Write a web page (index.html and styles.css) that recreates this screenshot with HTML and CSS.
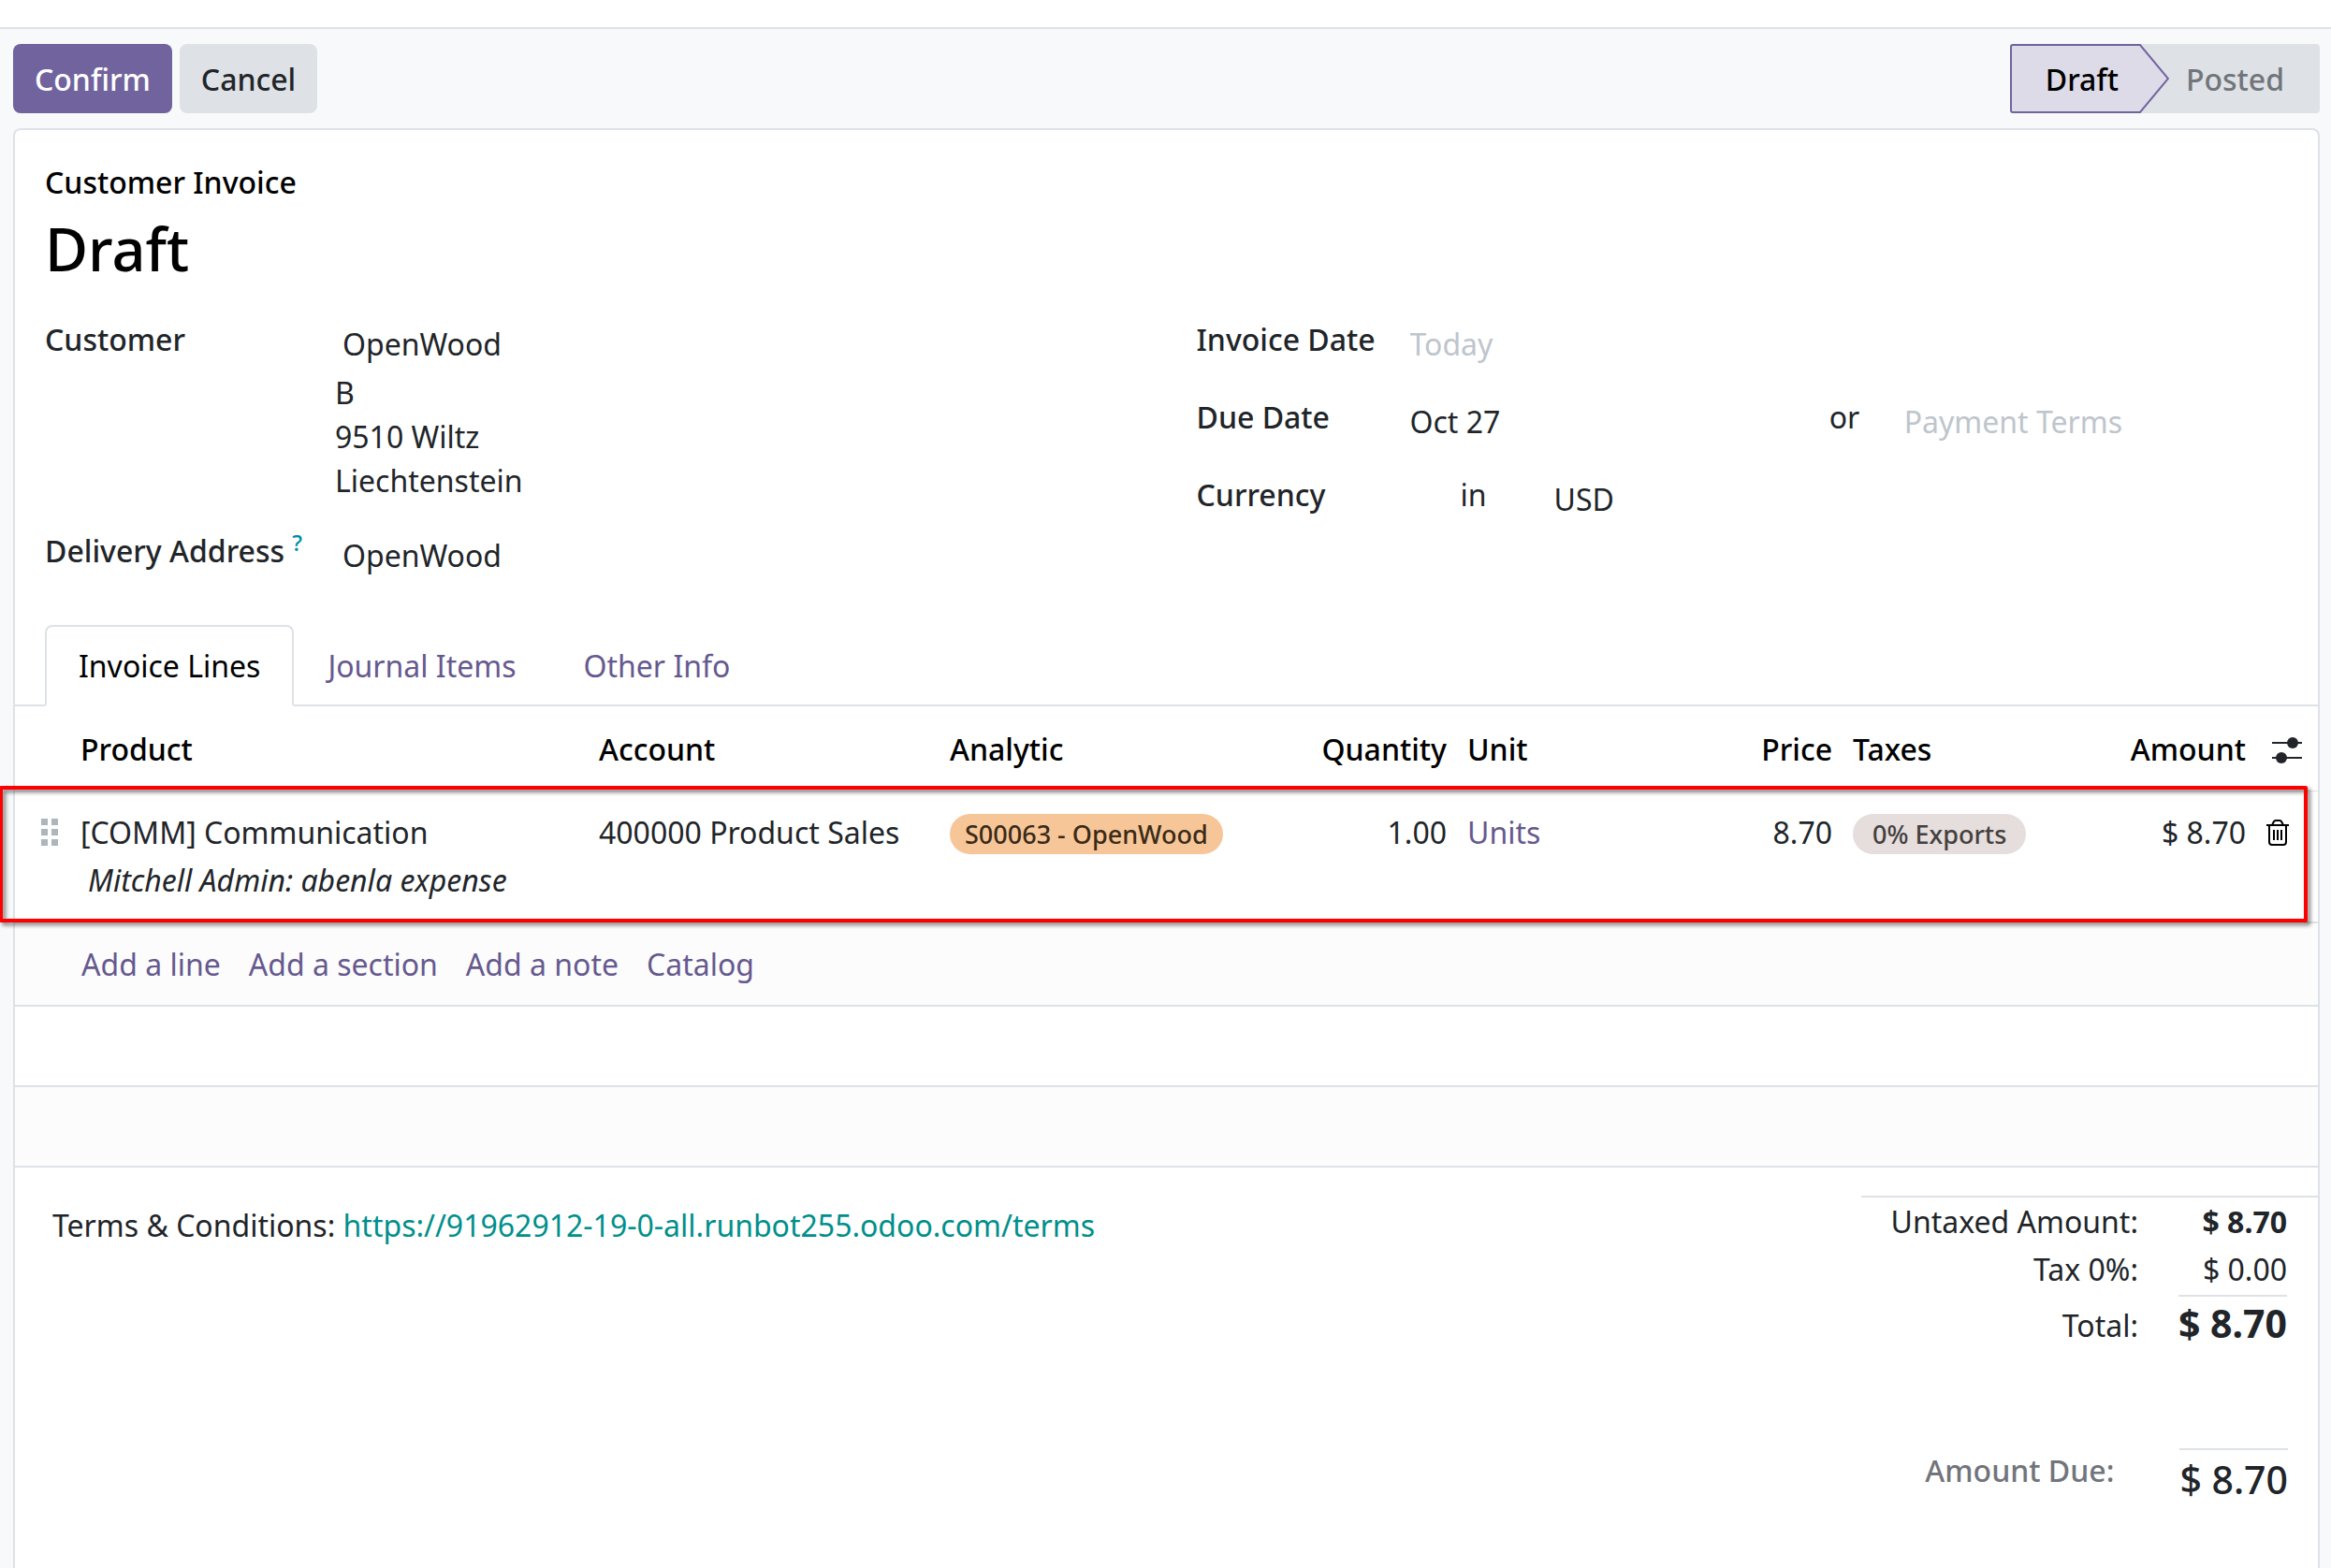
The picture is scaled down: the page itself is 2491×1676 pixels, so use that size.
FILE: index.html
```html
<!DOCTYPE html>
<html lang="en">
<head>
    <meta charset="UTF-8">
    <meta name="viewport" content="width=device-width, initial-scale=1.0">
    <title>Customer Invoice - Draft</title>
    <link rel="stylesheet" href="styles.css">
</head>
<body>
    <div class="navbar"></div>

    <header class="control-panel">
        <div class="actions">
            <button type="button" class="btn btn-primary">Confirm</button>
            <button type="button" class="btn btn-secondary">Cancel</button>
        </div>
        <div class="statusbar">
            <button type="button" class="status status-current">
                <svg class="status-arrow" width="170" height="74" viewBox="0 0 170 74">
                    <path d="M3 1H139L169 37L139 73H3Q1 73 1 71V3Q1 1 3 1Z" fill="#dedbe8" stroke="#71639e" stroke-width="2"/>
                </svg>
                <span>Draft</span>
            </button>
            <button type="button" class="status status-next">Posted</button>
        </div>
    </header>

    <main class="sheet">
        <div class="title">
            <span class="subtitle">Customer Invoice</span>
            <h1>Draft</h1>
        </div>

        <div class="groups">
            <div class="group group-left">
                <label for="customer">Customer</label>
                <div>
                    <input type="text" id="customer" value="OpenWood">
                    <address>B<br>9510 Wiltz<br>Liechtenstein</address>
                </div>
                <label for="delivery">Delivery Address <sup>?</sup></label>
                <div><input type="text" id="delivery" value="OpenWood"></div>
            </div>
            <div class="group group-right">
                <label for="invoiceDate">Invoice Date</label>
                <div><input type="text" id="invoiceDate" placeholder="Today"></div>
                <label for="dueDate">Due Date</label>
                <div class="due-date">
                    <input type="text" id="dueDate" value="Oct 27">
                    <span>or</span>
                    <input type="text" aria-label="Payment Terms" placeholder="Payment Terms">
                </div>
                <label for="currency">Currency</label>
                <div class="currency">
                    <span>in</span>
                    <input type="text" id="currency" value="USD">
                </div>
            </div>
        </div>

        <nav class="tabs">
            <a href="#lines" class="tab active">Invoice Lines</a>
            <a href="#journal" class="tab">Journal Items</a>
            <a href="#other" class="tab">Other Info</a>
        </nav>

        <div class="lines" id="lines">
            <table class="lines-table">
                <colgroup>
                    <col class="col-handle">
                    <col>
                    <col class="col-account">
                    <col class="col-analytic">
                    <col class="col-quantity">
                    <col class="col-unit">
                    <col class="col-price">
                    <col class="col-taxes">
                    <col class="col-amount">
                    <col class="col-options">
                </colgroup>
                <thead>
                    <tr>
                        <th></th>
                        <th>Product</th>
                        <th>Account</th>
                        <th>Analytic</th>
                        <th class="number">Quantity</th>
                        <th>Unit</th>
                        <th class="number">Price</th>
                        <th>Taxes</th>
                        <th class="number">Amount</th>
                        <th class="options">
                            <button type="button" class="icon-btn" aria-label="Optional columns">
                                <svg width="32" height="28" viewBox="0 0 32 28">
                                    <path d="M0 6H32M0 22H32" stroke="#212529" stroke-width="2"/>
                                    <circle cx="22" cy="6" r="6" fill="#212529"/>
                                    <circle cx="10" cy="22" r="6" fill="#212529"/>
                                </svg>
                            </button>
                        </th>
                    </tr>
                </thead>
                <tbody>
                    <tr class="line">
                        <td class="handle">
                            <svg width="19" height="29" viewBox="0 0 19 29" fill="#adb5bd">
                                <path d="M0 0h7v7H0zM11 0h7v7h-7zM0 11h7v7H0zM11 11h7v7h-7zM0 22h7v7H0zM11 22h7v7h-7z"/>
                            </svg>
                        </td>
                        <td>
                            [COMM] Communication
                            <div class="description">Mitchell Admin: abenla expense</div>
                        </td>
                        <td>400000 Product Sales</td>
                        <td><span class="badge badge-analytic">S00063 - OpenWood</span></td>
                        <td class="number">1.00</td>
                        <td><a href="#units">Units</a></td>
                        <td class="number">8.70</td>
                        <td><span class="badge badge-tax">0% Exports</span></td>
                        <td class="number">$ 8.70</td>
                        <td>
                            <button type="button" class="icon-btn" aria-label="Delete line">
                                <svg width="24" height="28" viewBox="0 0 24 28" fill="none" stroke="#000" stroke-width="2">
                                    <path d="M0 6H24M6 6L8 2Q8.500 1 10 1H14Q15.500 1 16 2L18 6M3 6V24Q3 27 6 27H18Q21 27 21 24V6M8 11V22M12 11V22M16 11V22"/>
                                </svg>
                            </button>
                        </td>
                    </tr>
                    <tr class="add-row">
                        <td></td>
                        <td colspan="9">
                            <div class="add-links">
                                <a href="#line">Add a line</a>
                                <a href="#section">Add a section</a>
                                <a href="#note">Add a note</a>
                                <a href="#catalog">Catalog</a>
                            </div>
                        </td>
                    </tr>
                    <tr class="empty-row"><td colspan="10"></td></tr>
                    <tr class="empty-row striped"><td colspan="10"></td></tr>
                </tbody>
            </table>
            <div class="highlight"></div>
        </div>

        <div class="footer">
            <p class="terms">Terms &amp; Conditions: <a href="#terms">https://91962912-19-0-all.runbot255.odoo.com/terms</a></p>
            <div class="totals">
                <table class="totals-table">
                    <tr>
                        <th>Untaxed Amount:</th>
                        <td class="bold">$ 8.70</td>
                    </tr>
                    <tr>
                        <th>Tax 0%:</th>
                        <td>$ 0.00</td>
                    </tr>
                    <tr class="total">
                        <th>Total:</th>
                        <td><span>$ 8.70</span></td>
                    </tr>
                </table>
                <div class="amount-due">
                    <span class="due-label">Amount Due:</span>
                    <span class="due-value">$ 8.70</span>
                </div>
            </div>
        </div>
    </main>
</body>
</html>
```

FILE: styles.css
```css
* {
    box-sizing: border-box;
}

body {
    display: flex;
    flex-direction: column;
    min-height: 100vh;
    margin: 0;
    background-color: #f8f9fa;
    color: #212529;
    font-family: "Noto Sans", sans-serif;
    font-size: 32px;
    line-height: 47px;
}

a {
    color: #66598f;
    text-decoration: none;
}

button,
input {
    font: inherit;
    color: inherit;
}

button {
    border: none;
    cursor: pointer;
}

/* Top bars */

.navbar {
    height: 31px;
    background-color: white;
    border-bottom: 2px solid #dee2e6;
}

.control-panel {
    display: flex;
    justify-content: space-between;
    padding: 16px 12px 16px 14px;
}

.actions {
    display: flex;
    gap: 8px;
}

.btn {
    height: 74px;
    padding: 0 23px;
    border-radius: 8px;
    font-weight: 500;
}

.btn-primary {
    background-color: #71639e;
    color: white;
}

.btn-secondary {
    background-color: #dee2e6;
}

.statusbar {
    display: flex;
}

.status {
    height: 74px;
    background-color: #dee2e6;
    font-weight: 500;
}

.status-current {
    position: relative;
    z-index: 1;
    width: 170px;
    padding: 0 16px 0 0;
    background: none;
    color: black;
}

.status-current span {
    position: relative;
}

.status-arrow {
    position: absolute;
    top: 0;
    left: 0;
}

.status-next {
    margin-left: -31px;
    padding: 0 38px 0 49px;
    border-radius: 0 4px 4px 0;
    color: #71757b;
    clip-path: polygon(0 0, 100% 0, 100% 100%, 0 100%, 31px 50%);
}

/* Sheet */

.sheet {
    flex: 1;
    margin: 0 12px 0 14px;
    background-color: white;
    border: 2px solid #dee2e6;
    border-bottom: none;
    border-radius: 8px 8px 0 0;
}

.title {
    padding: 32px 32px 0;
    color: black;
}

.subtitle {
    display: block;
    font-weight: 500;
}

h1 {
    margin: 0;
    font-size: 63px;
    font-weight: 500;
    line-height: 96px;
}

.groups {
    display: grid;
    grid-template-columns: 1fr 1fr;
    column-gap: 64px;
    padding: 25px 32px 46px;
}

.group {
    display: grid;
    align-content: start;
    row-gap: 26px;
}

.group-left {
    grid-template-columns: 310px 1fr;
}

.group-right {
    grid-template-columns: 220px 1fr;
}

.group label {
    font-weight: 500;
}

sup {
    color: #008caa;
    font-size: 24px;
    line-height: 0;
}

.group input {
    display: block;
    width: 100%;
    height: 57px;
    padding: 5px 8px 3px;
    border: none;
    border-bottom: 2px solid transparent;
    background: none;
}

.group input::placeholder {
    color: #bec5cc;
    opacity: 1;
}

address {
    padding-bottom: 2px;
    font-style: normal;
}

.due-date {
    display: grid;
    grid-template-columns: 15fr 80px 14fr;
}

.due-date span {
    padding-left: 8px;
}

.currency {
    display: grid;
    grid-template-columns: 154px 1fr;
}

.currency span {
    padding-left: 62px;
}

.tabs {
    display: flex;
    padding-left: 32px;
    border-bottom: 2px solid #dee2e6;
}

.tab {
    margin-bottom: -2px;
    padding: 18px 34px;
    border: 2px solid transparent;
    border-radius: 8px 8px 0 0;
}

.tab.active {
    background-color: white;
    border-color: #dee2e6;
    border-bottom-color: white;
    color: black;
}

/* Invoice lines */

.lines {
    position: relative;
}

.lines-table {
    width: 100%;
    table-layout: fixed;
    border-spacing: 0;
}

.col-handle { width: 59px; }
.col-account { width: 375px; }
.col-analytic { width: 364px; }
.col-quantity { width: 189px; }
.col-unit { width: 200px; }
.col-price { width: 212px; }
.col-taxes { width: 262px; }
.col-amount { width: 180px; }
.col-options { width: 66px; }

.lines-table th {
    height: 91px;
    padding: 0 11px;
    border-bottom: 1px solid #dee2e6;
    color: black;
    font-weight: 500;
    text-align: left;
}

.lines-table td {
    padding: 20px 11px;
    border-bottom: 2px solid #dee2e6;
    vertical-align: top;
}

.lines-table .number {
    text-align: right;
}

.lines-table .options {
    padding: 3px 0 0 17px;
}

.line td {
    height: 141px;
}

.lines-table .handle {
    padding: 29px 0 0 28px;
}

.handle svg,
.icon-btn svg {
    display: block;
}

.icon-btn {
    display: block;
    padding: 0;
    background: none;
}

.line .icon-btn {
    padding-top: 10px;
}

.description {
    padding: 4px 8px 0;
    font-style: italic;
}

.badge {
    display: inline-block;
    padding: 0 16px;
    border-radius: 22px;
    font-size: 27px;
    font-weight: 500;
    line-height: 43px;
}

.badge-analytic {
    background-color: #f7c698;
    color: #3b2a17;
}

.badge-tax {
    padding: 0 21px;
    background-color: #e6dddd;
    color: #43403e;
}

.add-row td,
.striped td {
    background-color: #fcfcfc;
}

.add-links {
    display: flex;
    gap: 30px;
    padding-left: 1px;
}

.empty-row td {
    height: 86px;
}

.highlight {
    position: absolute;
    top: 85px;
    left: -17px;
    right: 11px;
    height: 146px;
    border: 4px solid red;
    border-radius: 2px;
    filter: drop-shadow(3px 3px 2px rgba(0, 0, 0, 0.5));
    pointer-events: none;
}

/* Terms and totals */

.footer {
    display: flex;
    justify-content: space-between;
    padding-top: 30px;
}

.terms {
    margin: 0;
    padding: 8px 0 0 40px;
}

.terms a {
    color: #008f8c;
}

.totals {
    width: 488px;
}

.totals-table {
    width: 100%;
    border-top: 2px solid #dee2e6;
    border-spacing: 0;
}

.totals-table th {
    padding: 2px 0;
    font-weight: 400;
    text-align: right;
}

.totals-table td {
    width: 192px;
    padding: 2px 33px 2px 0;
    text-align: right;
}

.totals-table .bold {
    font-weight: 700;
}

.total th {
    padding: 6px 0 0;
}

.total span {
    display: inline-block;
    border-top: 2px solid #dee2e6;
    font-size: 41px;
    font-weight: 700;
    line-height: 56px;
}

.amount-due {
    display: flex;
    justify-content: flex-end;
    gap: 70px;
    margin-top: 104px;
    padding-right: 32px;
    font-weight: 500;
}

.due-label {
    color: #71757b;
}

.due-value {
    border-top: 2px solid #dee2e6;
    font-size: 41px;
    line-height: 62px;
}
```
